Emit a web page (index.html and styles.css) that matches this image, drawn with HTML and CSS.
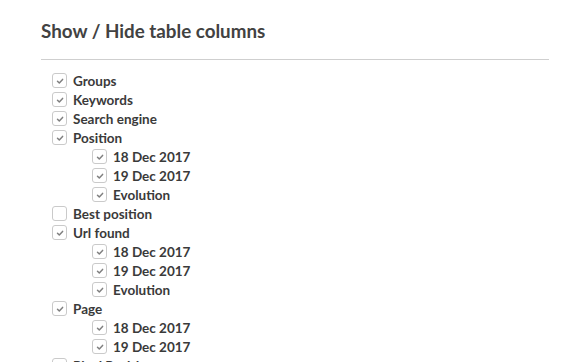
FILE: index.html
```html
<!DOCTYPE html>
<html>
<head>
<meta charset="utf-8">
<link rel="stylesheet" href="styles.css">
</head>
<body>
<div class="panel">
  <h2 class="title">Show / Hide table columns</h2>
  <div class="divider"></div>
  <ul class="cols">
    <li class="row"><span class="cb on"><svg viewBox="0 0 10 10"><path d="M2.5 5.2 L4.3 7 L7.6 3.4"/></svg></span><span>Groups</span></li>
    <li class="row"><span class="cb on"><svg viewBox="0 0 10 10"><path d="M2.5 5.2 L4.3 7 L7.6 3.4"/></svg></span><span>Keywords</span></li>
    <li class="row"><span class="cb on"><svg viewBox="0 0 10 10"><path d="M2.5 5.2 L4.3 7 L7.6 3.4"/></svg></span><span>Search engine</span></li>
    <li class="row"><span class="cb on"><svg viewBox="0 0 10 10"><path d="M2.5 5.2 L4.3 7 L7.6 3.4"/></svg></span><span>Position</span></li>
    <li class="row sub"><span class="cb on"><svg viewBox="0 0 10 10"><path d="M2.5 5.2 L4.3 7 L7.6 3.4"/></svg></span><span>18 Dec 2017</span></li>
    <li class="row sub"><span class="cb on"><svg viewBox="0 0 10 10"><path d="M2.5 5.2 L4.3 7 L7.6 3.4"/></svg></span><span>19 Dec 2017</span></li>
    <li class="row sub"><span class="cb on"><svg viewBox="0 0 10 10"><path d="M2.5 5.2 L4.3 7 L7.6 3.4"/></svg></span><span>Evolution</span></li>
    <li class="row"><span class="cb"></span><span>Best position</span></li>
    <li class="row"><span class="cb on"><svg viewBox="0 0 10 10"><path d="M2.5 5.2 L4.3 7 L7.6 3.4"/></svg></span><span>Url found</span></li>
    <li class="row sub"><span class="cb on"><svg viewBox="0 0 10 10"><path d="M2.5 5.2 L4.3 7 L7.6 3.4"/></svg></span><span>18 Dec 2017</span></li>
    <li class="row sub"><span class="cb on"><svg viewBox="0 0 10 10"><path d="M2.5 5.2 L4.3 7 L7.6 3.4"/></svg></span><span>19 Dec 2017</span></li>
    <li class="row sub"><span class="cb on"><svg viewBox="0 0 10 10"><path d="M2.5 5.2 L4.3 7 L7.6 3.4"/></svg></span><span>Evolution</span></li>
    <li class="row"><span class="cb on"><svg viewBox="0 0 10 10"><path d="M2.5 5.2 L4.3 7 L7.6 3.4"/></svg></span><span>Page</span></li>
    <li class="row sub"><span class="cb on"><svg viewBox="0 0 10 10"><path d="M2.5 5.2 L4.3 7 L7.6 3.4"/></svg></span><span>18 Dec 2017</span></li>
    <li class="row sub"><span class="cb on"><svg viewBox="0 0 10 10"><path d="M2.5 5.2 L4.3 7 L7.6 3.4"/></svg></span><span>19 Dec 2017</span></li>
    <li class="row"><span class="cb on"><svg viewBox="0 0 10 10"><path d="M2.5 5.2 L4.3 7 L7.6 3.4"/></svg></span><span>Pixel Position</span></li>
  </ul>
</div>
</body>
</html>
```

FILE: styles.css
```css
html, body {
  margin: 0;
  padding: 0;
  background: #fff;
  height: 362px;
  overflow: hidden;
}
.panel {
  padding: 19px 13px 0 41px;
  font-family: Lato, "Open Sans", sans-serif;
  color: #3c3c3c;
}
.title {
  margin: 0;
  font-size: 18.8px;
  font-weight: 700;
  line-height: 24px;
  color: #424242;
}
.divider {
  margin-top: 16px;
  height: 1px;
  background: #cfcfcf;
}
.cols {
  list-style: none;
  margin: 11px 0 0 0;
  padding: 0 0 0 11px;
}
.row {
  display: flex;
  align-items: center;
  height: 19px;
  font-size: 13.5px;
  font-weight: 700;
  color: #3a3a3a;
}
.row.sub {
  padding-left: 40px;
}
.cb {
  box-sizing: border-box;
  width: 15px;
  height: 15px;
  border: 1px solid #cacaca;
  border-radius: 3px;
  margin-right: 6px;
  display: flex;
  align-items: center;
  justify-content: center;
  background: #fff;
}
.cb svg {
  width: 10px;
  height: 10px;
  fill: none;
  stroke: #808080;
  stroke-width: 1.5;
  stroke-linecap: round;
  stroke-linejoin: round;
}
```
